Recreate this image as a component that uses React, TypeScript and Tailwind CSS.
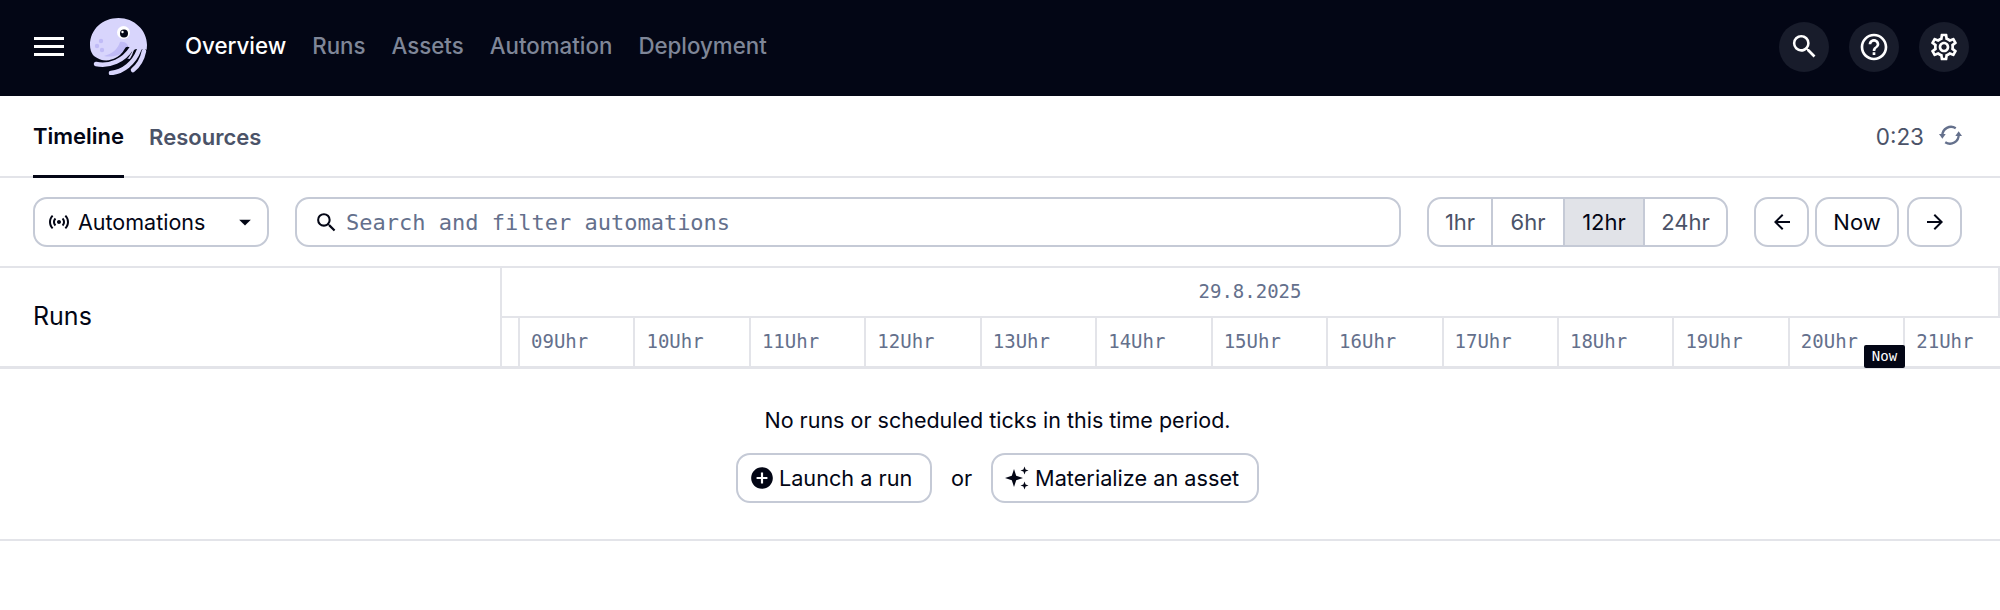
import { MdSearch, MdHelpOutline, MdOutlineSettings, MdSensors, MdArrowDropDown, MdArrowBack, MdArrowForward, MdAddCircle } from 'react-icons/md';

const sans = "font-['Inter','Noto_Sans',sans-serif]";
const mono = "font-['DejaVu_Sans_Mono','Liberation_Mono',monospace]";

const navItems = ['Overview', 'Runs', 'Assets', 'Automation', 'Deployment'];
const hours = ['09', '10', '11', '12', '13', '14', '15', '16', '17', '18', '19', '20', '21'];

function Logo() {
  return (
    <svg width="57" height="57" viewBox="0 0 57 57" fill="none">
      {/* head */}
      <path d="M0 27 C0 11 13 0 28.5 0 C44 0 57 12 57 27 C57 33 55.5 38 53 42 L30 40 C20 46 8 42 3 37 C1 34 0 31 0 27 Z" fill="#d8d5fc" />
      <path d="M30 24 C35 23 39 26 38 31 C32 37 22 40 14 38 C22 36 28 31 30 24 Z" fill="#c0bbf6" />
      {/* tentacles */}
      <path d="M6 46 C20 49 33 43 38 33" stroke="#030615" strokeWidth="8" strokeLinecap="round" />
      <path d="M21 56 C33 55 44 46 47 35" stroke="#030615" strokeWidth="8" strokeLinecap="round" />
      <path d="M43 53 C48 49 52 43 54 35" stroke="#030615" strokeWidth="8" strokeLinecap="round" />
      <path d="M6 46 C20 49 34 42 41 31" stroke="#d8d5fc" strokeWidth="4.5" strokeLinecap="round" />
      <path d="M21 55 C33 54 44 45 49 32" stroke="#d8d5fc" strokeWidth="4.5" strokeLinecap="round" />
      <path d="M43 52 C48 48 52 43 54 33" stroke="#d8d5fc" strokeWidth="4.5" strokeLinecap="round" />
      {/* eye */}
      <circle cx="33.5" cy="14.5" r="6.5" fill="#ffffff" />
      <circle cx="34" cy="15.5" r="4" fill="#030615" />
      <circle cx="32.5" cy="14" r="1.2" fill="#ffffff" />
      <circle cx="11" cy="23" r="2.2" fill="#c0bbf6" />
      <circle cx="7" cy="28" r="2.2" fill="#c0bbf6" />
      <circle cx="12" cy="32" r="2.2" fill="#c0bbf6" />
    </svg>
  );
}

function RefreshIcon() {
  return (
    <svg width="23" height="23" viewBox="0 0 24 24" fill="none" stroke="#64708c" strokeWidth="2.4" className="-mt-[3px]">
      <path d="M3.5 12 A9 9 0 0 1 17.5 4.5" />
      <path d="M20.5 11 A9 9 0 0 1 6.5 19" />
      <path d="M0 10.5 L7 10.5 L3.5 15.5 Z" fill="#64708c" stroke="none" />
      <path d="M17 12.5 L24 12.5 L20.5 7.5 Z" fill="#64708c" stroke="none" />
    </svg>
  );
}

function SparkleIcon() {
  return (
    <svg width="26" height="26" viewBox="0 0 26 26" fill="currentColor">
      <path d="M10 4 L12.2 10.8 L19 13 L12.2 15.2 L10 22 L7.8 15.2 L1 13 L7.8 10.8 Z" />
      <path d="M20.5 1.5 L21.6 4.4 L24.5 5.5 L21.6 6.6 L20.5 9.5 L19.4 6.6 L16.5 5.5 L19.4 4.4 Z" />
      <path d="M20.5 16.5 L21.6 19.4 L24.5 20.5 L21.6 21.6 L20.5 24.5 L19.4 21.6 L16.5 20.5 L19.4 19.4 Z" />
    </svg>
  );
}

function Header() {
  return (
    <header className="flex h-[96px] items-center bg-[#030615] pb-[3px] pl-[34px] pr-[31px]">
      <div className="flex w-[30px] flex-col gap-[5px]">
        <span className="h-[3px] bg-white" />
        <span className="h-[3px] bg-white" />
        <span className="h-[3px] bg-white" />
      </div>
      <div className="ml-[26px] mr-[38px]">
        <Logo />
      </div>
      <nav className="flex items-center gap-[26px] pb-[2px]">
        {navItems.map((item, i) => (
          <span key={item} className={`text-[22.3px] font-medium ${i === 0 ? 'text-white' : 'text-[#7f8698]'}`}>
            {item}
          </span>
        ))}
      </nav>
      <div className="ml-auto flex items-center gap-[20px]">
        <div className="flex h-[50px] w-[50px] items-center justify-center rounded-full bg-[#181c2b]">
          <MdSearch className="text-[31px] text-white" />
        </div>
        <div className="flex h-[50px] w-[50px] items-center justify-center rounded-full bg-[#181c2b]">
          <MdHelpOutline className="text-[32px] text-white" />
        </div>
        <div className="flex h-[50px] w-[50px] items-center justify-center rounded-full bg-[#181c2b]">
          <MdOutlineSettings className="text-[32px] text-white" />
        </div>
      </div>
    </header>
  );
}

function Tabs() {
  return (
    <div className="flex h-[82px] items-stretch border-b-2 border-[#e3e4e9] pl-[33px] pr-[38px]">
      <div className="-mb-[2px] flex items-center border-b-[3px] border-[#030615] pt-[2px] text-[22px] font-semibold text-[#030615]">
        Timeline
      </div>
      <div className="ml-[25px] flex items-center pt-[2px] text-[22px] font-semibold text-[#4b5368]">Resources</div>
      <div className="ml-auto flex items-center gap-[15px] pt-[2px]">
        <span className="text-[22.5px] text-[#4b5368]">0:23</span>
        <RefreshIcon />
      </div>
    </div>
  );
}

function Toolbar() {
  return (
    <div className="flex h-[88px] items-center pl-[33px] pr-[38px]">
      <div className="flex h-[50px] w-[236px] shrink-0 items-center rounded-[14px] border-2 border-[#c5cad6] pl-[12px] pr-[8px] text-[21.5px] text-[#030615]">
        <MdSensors className="text-[24px]" />
        <span className="ml-[7px]">Automations</span>
        <MdArrowDropDown className="ml-auto text-[28px]" />
      </div>
      <div className="ml-[26px] flex h-[50px] w-[1106px] shrink-0 items-center rounded-[14px] border-2 border-[#c5cad6] pl-[17px]">
        <MdSearch className="text-[25px] text-[#030615]" />
        <span className={`ml-[7px] text-[22px] text-[#64708c] ${mono}`}>Search and filter automations</span>
      </div>
      <div className="ml-[26px] flex h-[50px] w-[301px] shrink-0 overflow-hidden rounded-[14px] border-2 border-[#c5cad6] text-[22px] text-[#4b5368]">
        <div className="flex w-[64px] items-center justify-center border-r-2 border-[#c5cad6]">1hr</div>
        <div className="flex w-[72px] items-center justify-center border-r-2 border-[#c5cad6]">6hr</div>
        <div className="flex w-[80px] items-center justify-center border-r-2 border-[#c5cad6] bg-[#e1e3e8] text-[#030615]">12hr</div>
        <div className="flex flex-1 items-center justify-center">24hr</div>
      </div>
      <div className="ml-[26px] flex h-[50px] w-[55px] shrink-0 items-center justify-center rounded-[14px] border-2 border-[#c5cad6]">
        <MdArrowBack className="text-[24px] text-[#030615]" />
      </div>
      <div className="ml-[6px] flex h-[50px] w-[84px] shrink-0 items-center justify-center rounded-[14px] border-2 border-[#c5cad6] text-[22px] text-[#030615]">
        Now
      </div>
      <div className="ml-[8px] flex h-[50px] w-[55px] shrink-0 items-center justify-center rounded-[14px] border-2 border-[#c5cad6]">
        <MdArrowForward className="text-[24px] text-[#030615]" />
      </div>
    </div>
  );
}

function TimelineHead() {
  return (
    <div className="flex h-[103px] border-y-2 border-b-[3px] border-[#e3e4e9]">
      <div className="flex w-[502px] shrink-0 items-center border-r-2 border-[#e3e4e9] pl-[33px] text-[25px] text-[#030615]">Runs</div>
      <div className="flex min-w-0 flex-1 flex-col">
        <div className={`flex h-[50px] items-center justify-center border-b-2 border-r-2 border-[#e3e4e9] pb-[2px] text-[19px] text-[#64708c] ${mono}`}>
          29.8.2025
        </div>
        <div className="relative flex flex-1">
          <div className="w-[18px] shrink-0 border-r-2 border-[#e3e4e9]" />
          {hours.map((h) => (
            <div
              key={h}
              className={`flex w-[115.45px] shrink-0 items-center border-r-2 border-[#e3e4e9] pb-[2px] pl-[11px] last:w-[94px] last:border-r-0 text-[19px] text-[#64708c] ${mono}`}
            >
              {h}Uhr
            </div>
          ))}
          <div className={`absolute -bottom-[2px] right-[95px] flex h-[23px] w-[41px] items-center justify-center rounded-[2px] bg-[#030615] text-[14px] text-white ${mono}`}>
            Now
          </div>
        </div>
      </div>
    </div>
  );
}

function EmptyState() {
  return (
    <div className="flex h-[172px] flex-col items-center border-b-2 border-[#e3e4e9] pr-[5px] pt-[37px] text-[#030615]">
      <div className="text-[21.5px] leading-[28px]">No runs or scheduled ticks in this time period.</div>
      <div className="mt-[19px] flex items-center text-[21.7px]">
        <div className="flex h-[50px] w-[196px] items-center gap-[4px] rounded-[14px] border-2 border-[#c5cad6] pl-[11px]">
          <MdAddCircle className="text-[26px]" />
          Launch a run
        </div>
        <span className="mx-[19px]">or</span>
        <div className="flex h-[50px] w-[268px] items-center gap-[5px] rounded-[14px] border-2 border-[#c5cad6] pl-[11px]">
          <SparkleIcon />
          Materialize an asset
        </div>
      </div>
    </div>
  );
}

export default function App() {
  return (
    <div className={`h-[610px] overflow-hidden bg-white ${sans}`}>
      <Header />
      <Tabs />
      <Toolbar />
      <TimelineHead />
      <EmptyState />
    </div>
  );
}
